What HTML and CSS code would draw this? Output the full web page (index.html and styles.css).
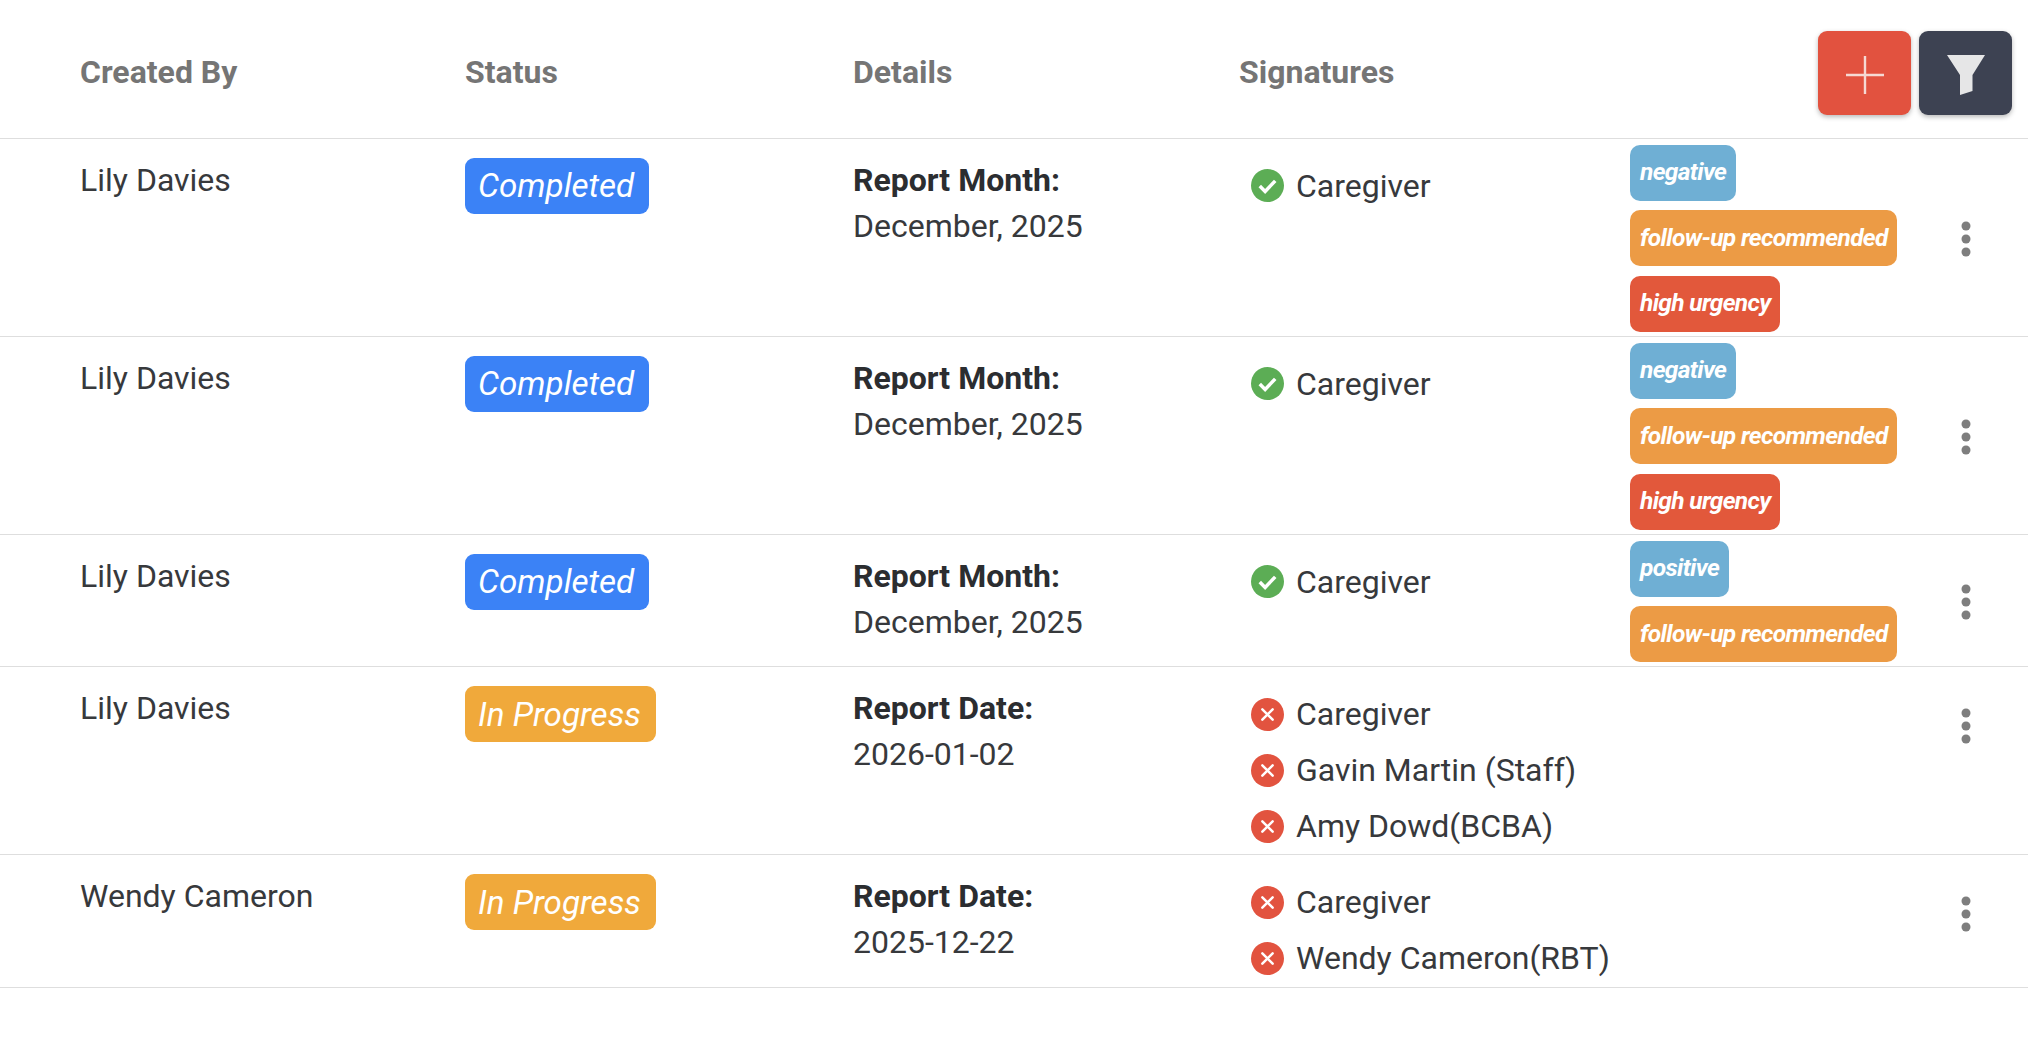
FILE: index.html
```html
<!DOCTYPE html>
<html lang="en">
<head>
<meta charset="utf-8">
<title>Reports</title>
<link rel="stylesheet" href="styles.css">
</head>
<body>
<svg class="defs" width="0" height="0" aria-hidden="true">
  <symbol id="ok" viewBox="0 0 32 32"><circle cx="16" cy="16" r="16" fill="#5cad55"/><path d="M8.500 16.500l5.200 5.200L23.500 11.500" fill="none" stroke="#fff" stroke-width="3.400"/></symbol>
  <symbol id="no" viewBox="0 0 32 32"><circle cx="16" cy="16" r="16" fill="#e2533f"/><path d="M11 11l10 10M21 11L11 21" fill="none" stroke="#fff" stroke-width="2.400" stroke-linecap="round"/></symbol>
  <symbol id="more" viewBox="0 0 10 36"><circle cx="5" cy="5" r="4.500"/><circle cx="5" cy="18" r="4.500"/><circle cx="5" cy="31" r="4.500"/></symbol>
</svg>
<main class="table">
  <header class="row head">
    <div class="hcell">Created By</div>
    <div class="hcell">Status</div>
    <div class="hcell">Details</div>
    <div class="hcell">Signatures</div>
    <div class="actions">
      <button class="btn btn-add" aria-label="Add"><svg width="40" height="40" viewBox="0 0 40 40"><path d="M20 1v38M1 20h38" stroke="#f6d9d3" stroke-width="2.400"/></svg></button>
      <button class="btn btn-filter" aria-label="Filter"><svg width="38" height="40" viewBox="0 0 38 40"><path d="M0 0h38L25.500 20v16l-12.500 4V20z" fill="#e6e6e7"/></svg></button>
    </div>
  </header>

  <section class="row">
    <div class="cell name">Lily Davies</div>
    <div class="cell"><span class="status done">Completed</span></div>
    <div class="cell details"><b>Report Month:</b><span>December, 2025</span></div>
    <div class="cell sigs"><div class="sig"><svg class="ico"><use href="#ok"/></svg>Caregiver</div></div>
    <div class="tags"><span class="tag blue">negative</span><span class="tag orange">follow-up recommended</span><span class="tag red">high urgency</span></div>
    <div class="kebab"><svg class="more"><use href="#more"/></svg></div>
  </section>

  <section class="row">
    <div class="cell name">Lily Davies</div>
    <div class="cell"><span class="status done">Completed</span></div>
    <div class="cell details"><b>Report Month:</b><span>December, 2025</span></div>
    <div class="cell sigs"><div class="sig"><svg class="ico"><use href="#ok"/></svg>Caregiver</div></div>
    <div class="tags"><span class="tag blue">negative</span><span class="tag orange">follow-up recommended</span><span class="tag red">high urgency</span></div>
    <div class="kebab"><svg class="more"><use href="#more"/></svg></div>
  </section>

  <section class="row">
    <div class="cell name">Lily Davies</div>
    <div class="cell"><span class="status done">Completed</span></div>
    <div class="cell details"><b>Report Month:</b><span>December, 2025</span></div>
    <div class="cell sigs"><div class="sig"><svg class="ico"><use href="#ok"/></svg>Caregiver</div></div>
    <div class="tags"><span class="tag blue">positive</span><span class="tag orange">follow-up recommended</span></div>
    <div class="kebab"><svg class="more"><use href="#more"/></svg></div>
  </section>

  <section class="row">
    <div class="cell name">Lily Davies</div>
    <div class="cell"><span class="status progress">In Progress</span></div>
    <div class="cell details"><b>Report Date:</b><span>2026-01-02</span></div>
    <div class="cell sigs">
      <div class="sig"><svg class="ico"><use href="#no"/></svg>Caregiver</div>
      <div class="sig"><svg class="ico"><use href="#no"/></svg>Gavin Martin (Staff)</div>
      <div class="sig"><svg class="ico"><use href="#no"/></svg>Amy Dowd(BCBA)</div>
    </div>
    <div class="tags"></div>
    <div class="kebab kebab-top"><svg class="more"><use href="#more"/></svg></div>
  </section>

  <section class="row last">
    <div class="cell name">Wendy Cameron</div>
    <div class="cell"><span class="status progress">In Progress</span></div>
    <div class="cell details"><b>Report Date:</b><span>2025-12-22</span></div>
    <div class="cell sigs">
      <div class="sig"><svg class="ico"><use href="#no"/></svg>Caregiver</div>
      <div class="sig"><svg class="ico"><use href="#no"/></svg>Wendy Cameron(RBT)</div>
    </div>
    <div class="tags"></div>
    <div class="kebab kebab-top"><svg class="more"><use href="#more"/></svg></div>
  </section>
</main>
</body>
</html>
```
FILE: styles.css
```css
* { box-sizing: border-box; }
html, body { margin: 0; background: #fff; }
body {
  width: 2028px;
  height: 1040px;
  overflow: hidden;
  font-family: Roboto, "Liberation Sans", sans-serif;
  font-size: 32px;
  color: #37393c;
}
.defs { position: absolute; }
.row {
  display: grid;
  grid-template-columns: 465px 388px 386px 391px 1fr 68px;
  border-bottom: 1px solid #dedede;
  align-items: start;
}
.head { height: 138.500px; align-items: center; }
.hcell { font-weight: 700; color: #757575; padding-top: 6px; }
.hcell:first-child, .cell:first-child { padding-left: 80px; }
.actions { grid-column: 5 / 7; display: flex; justify-content: flex-end; gap: 8px; padding-right: 16px; margin-top: 9px; }
.btn {
  width: 93px;
  height: 84px;
  border: 0;
  border-radius: 9px;
  padding: 4px 0 0;
  display: flex;
  align-items: center;
  justify-content: center;
  box-shadow: 0 2px 5px rgba(0,0,0,.28);
}
.btn-add { background: #e2523f; }
.btn-filter { background: #3d4252; }
.cell { min-width: 0; }
.name { padding-top: 21px; line-height: 40px; }
.status {
  display: inline-flex;
  align-items: center;
  height: 56px;
  margin-top: 19px;
  padding: 0 15px 0 13px;
  border-radius: 9px;
  color: #fff;
  font-size: 33.200px;
  font-style: italic;
}
.done { background: #3b82f6; }
.progress { background: #f0a93b; }
.details { padding-top: 21px; display: flex; flex-direction: column; line-height: 53px; }
.details b { font-weight: 700; color: #2b2d30; line-height: 40px; }
.sigs { padding: 19px 0 0 12px; }
.sig { display: flex; align-items: center; height: 56px; white-space: nowrap; }
.ico { width: 33px; height: 33px; margin-right: 12px; flex: none; }
.tags { display: flex; flex-direction: column; align-items: flex-start; gap: 9.500px; padding: 6px 0 4px; }
.tag {
  height: 56px;
  display: inline-flex;
  align-items: center;
  padding: 0 9.500px 2px 10px;
  border-radius: 10px;
  color: #fff;
  font-size: 24.500px;
  font-weight: 700;
  font-style: italic;
  letter-spacing: -0.65px;
  white-space: nowrap;
}
.blue { background: #6fafd4; }
.orange { background: #ec9b45; }
.red { background: #e2583b; }
.kebab { align-self: center; justify-self: start; display: flex; padding: 3px 0 0 1px; }
.kebab-top { align-self: start; padding-top: 41px; }
.more { width: 10px; height: 36px; fill: #7e7e7e; }
.last { min-height: 133px; }
```
